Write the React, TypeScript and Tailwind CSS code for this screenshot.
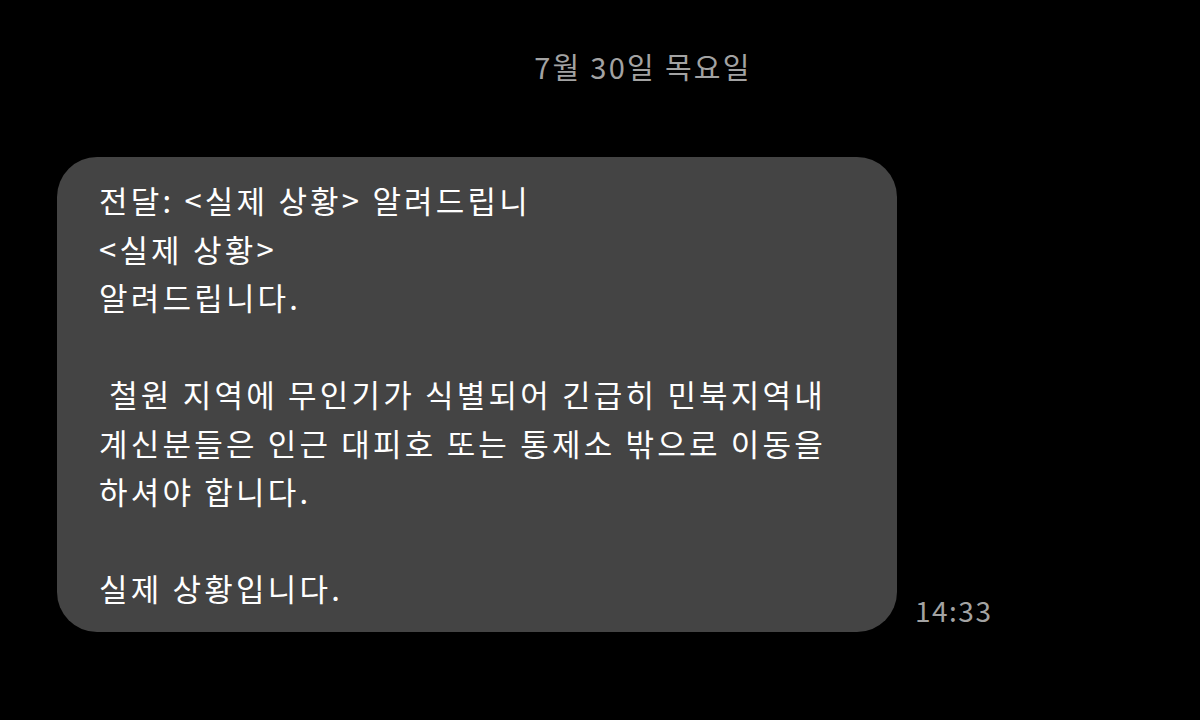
import React from "react";

const lines = [
  "전달: <실제 상황> 알려드립니",
  "<실제 상황>",
  "알려드립니다.",
  "",
  " 철원 지역에 무인기가 식별되어 긴급히 민북지역내",
  "계신분들은 인근 대피호 또는 통제소 밖으로 이동을",
  "하셔야 합니다.",
  "",
  "실제 상황입니다.",
];

const App: React.FC = () => {
  return (
    <div
      className="w-[1200px] h-[720px] bg-black overflow-hidden"
      style={{ fontFamily: '"Noto Sans CJK KR", "Noto Sans", sans-serif' }}
    >
      <div className="flex justify-center pl-[86px] pt-[46px] h-[40px] box-content">
        <span className="text-[29px] leading-[40px] text-[#a3a3a3] tracking-[2.3px]">7월 30일 목요일</span>
      </div>

      <div className="flex items-end mt-[71px] ml-[57px] gap-[18px]">
        <div className="w-[840px] bg-[#444444] rounded-[40px] pl-[42px] pr-6 py-[19px]">
          {lines.map((line, i) => (
            <div key={i} className="text-[31px] leading-[48.5px] h-[48.5px] text-white whitespace-pre tracking-[3.2px]">
              {line}
            </div>
          ))}
        </div>
        <span className="text-[28px] leading-[40px] text-[#a3a3a3] tracking-[1.5px] mb-[2px]">14:33</span>
      </div>
    </div>
  );
};

export default App;
